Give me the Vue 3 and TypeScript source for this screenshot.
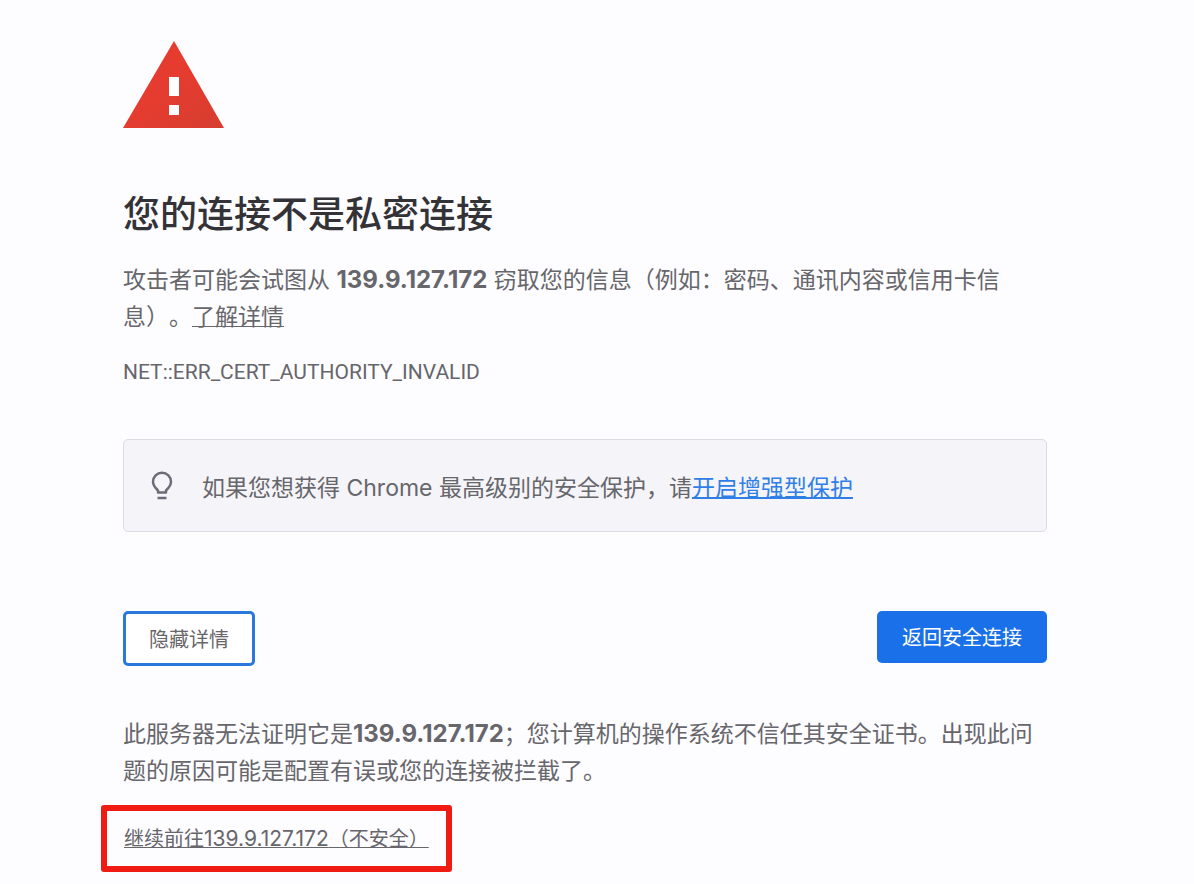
<script setup lang="ts">
const host = '139.9.127.172'
const errorCode = 'NET::ERR_CERT_AUTHORITY_INVALID'
</script>

<template>
  <main class="page">
    <svg class="warning" viewBox="0 0 101 87" aria-hidden="true">
      <defs>
        <linearGradient id="shade" x1="0" y1="0" x2="1" y2="1">
          <stop offset="0.4" stop-color="#e63c2f" />
          <stop offset="1" stop-color="#d63d2f" />
        </linearGradient>
      </defs>
      <path d="M51 0 101 87H0Z" fill="url(#shade)" />
      <path d="M46 36h10v19H46zM46 64h10v10H46z" fill="#fff" />
    </svg>

    <h1>您的连接不是私密连接</h1>
    <p class="body">攻击者可能会试图从 <strong>{{ host }}</strong> 窃取您的信息（例如：密码、通讯内容或信用卡信息）。<a href="#details">了解详情</a></p>
    <p class="code">{{ errorCode }}</p>

    <section class="tip">
      <svg class="bulb" viewBox="0 0 22 30" aria-hidden="true">
        <path d="M7 21.500v-2C3.800 16.500 2 14 2 10.800a9 9 0 0 1 18 0c0 3.200-1.800 5.700-5 8.700v2Z" fill="none" stroke="#6b6c78" stroke-width="2.500" stroke-linejoin="round" />
        <path d="M6.500 27h9" stroke="#6b6c78" stroke-width="2.500" />
      </svg>
      <p class="body">如果您想获得 Chrome 最高级别的安全保护，请<a class="accent" href="#protection">开启增强型保护</a></p>
    </section>

    <div class="actions">
      <button type="button" class="secondary">隐藏详情</button>
      <button type="button" class="primary">返回安全连接</button>
    </div>

    <p class="body">此服务器无法证明它是<strong>{{ host }}</strong>；您计算机的操作系统不信任其安全证书。出现此问题的原因可能是配置有误或您的连接被拦截了。</p>
    <div class="proceed"><a href="#proceed">继续前往<span class="host">{{ host }}</span>（不安全）</a></div>
  </main>
</template>

<style>
body {
  margin: 0;
  background: #fdfcff;
}
</style>

<style scoped>
.page {
  padding: 41px 147px 12px 123px;
  font-family: Inter, "Noto Sans CJK SC", sans-serif;
  color: #66666b;
  text-spacing-trim: space-all;
}
.warning {
  display: block;
  width: 101px;
  height: 87px;
}
h1 {
  margin: 65px 0 25px;
  font-size: 37px;
  line-height: 44px;
  font-weight: 500;
  color: #333337;
}
p {
  margin: 0;
}
.body {
  font-size: 23px;
  line-height: 37px;
}
strong {
  font-size: 24px;
  font-weight: 700;
  line-height: 24px;
}
a {
  color: inherit;
  text-decoration-thickness: 1px;
}
.code {
  margin-top: 24px;
  font-family: Roboto, sans-serif;
  font-size: 21px;
  line-height: 24px;
}
.tip {
  display: flex;
  align-items: center;
  gap: 29px;
  box-sizing: border-box;
  min-height: 93px;
  margin-top: 55px;
  padding: 12px 27px;
  border: 1px solid #dddce2;
  border-radius: 5px;
  background: #f5f4f9;
}
.tip .body {
  padding-top: 5px;
}
.bulb {
  flex: none;
  width: 22px;
  height: 30px;
}
.accent {
  color: #2f7fe6;
  text-decoration-thickness: 2px;
}
.actions {
  display: flex;
  justify-content: space-between;
  align-items: flex-start;
  margin: 79px 0 50px;
}
button {
  font-family: inherit;
  font-size: 20px;
  line-height: 24px;
  border-radius: 5px;
}
.secondary {
  padding: 14px 23px 11px;
  border: 3px solid #2b78dc;
  background: #fff;
  color: #66666b;
}
.primary {
  padding: 15px 25px 13px;
  border: 0;
  background: #1a70e8;
  color: #fff;
}
.proceed {
  width: fit-content;
  margin: 15px 0 0 -22px;
  padding: 16px 17px 15px;
  border: 6px solid #f01c14;
  border-radius: 3px;
  font-size: 20px;
  line-height: 24px;
}
.host {
  font-size: 21px;
}
</style>
